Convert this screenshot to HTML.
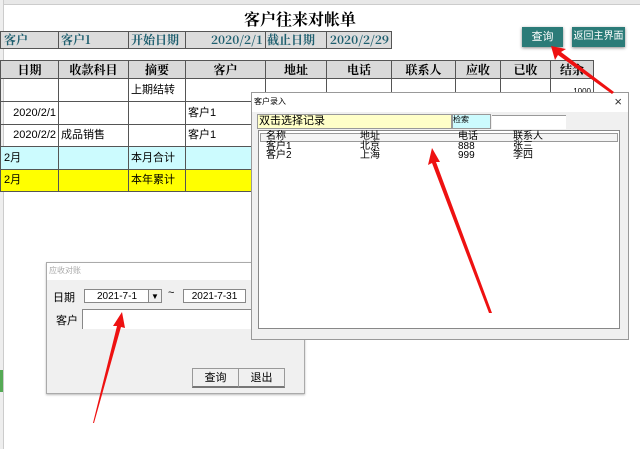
<!DOCTYPE html>
<html><head><meta charset="utf-8"><style>
body{margin:0;width:640px;height:449px;overflow:hidden;background:#fff;font-family:"Liberation Sans","Noto Sans CJK SC",sans-serif;position:relative;font-size:11px}
.a{position:absolute;box-sizing:border-box}
.c{position:absolute;box-sizing:border-box;border:1px solid #555;white-space:nowrap;line-height:20px;font-size:11px}
.h{background:#d9d9d9;text-align:center;font-weight:bold;font-family:"Noto Serif CJK SC",serif;font-size:12px}
.t{background:#dcdcdc;color:#1f5f6f;font-family:"Noto Serif CJK SC",serif;font-size:12px;font-weight:bold;line-height:15px}
</style></head><body>
<div class="a" style="left:0;top:0;width:640px;height:5px;background:#e8e8e8;border-bottom:1px solid #ccc"></div>
<div class="a" style="left:0;top:0;width:4px;height:449px;background:#eee;border-right:1px solid #ccc"></div>
<div class="a" style="left:0;top:370px;width:3px;height:22px;background:#5a5"></div>
<div class="a" style="left:200px;top:7px;width:200px;text-align:center;font-weight:bold;font-size:16px;font-family:'Noto Serif CJK SC',serif">客户往来对帐单</div>
<div class="c t" style="left:0;top:31px;width:59px;height:18px;padding-left:3px">客户</div>
<div class="c t" style="left:58px;top:31px;width:71px;height:18px;padding-left:2px">客户1</div>
<div class="c t" style="left:128px;top:31px;width:58px;height:18px;padding-left:2px">开始日期</div>
<div class="c t" style="left:185px;top:31px;width:81px;height:18px;text-align:right;padding-right:2px">2020/2/1</div>
<div class="c t" style="left:265px;top:31px;width:62px;height:18px;padding-left:1px">截止日期</div>
<div class="c t" style="left:326px;top:31px;width:66px;height:18px;text-align:right;padding-right:2px">2020/2/29</div>
<div class="a" style="left:522px;top:27px;width:41px;height:20px;background:#2b7b78;color:#fff;text-align:center;line-height:20px;box-shadow:0 1px 3px #888">查询</div>
<div class="a" style="left:572px;top:27px;width:53px;height:20px;background:#2b7b78;color:#fff;text-align:center;line-height:20px;font-size:10px;box-shadow:0 1px 3px #888">返回主界面</div>
<div class="c h" style="left:0;top:60px;width:59px;height:19px;line-height:17px">日期</div>
<div class="c h" style="left:58px;top:60px;width:71px;height:19px;line-height:17px">收款科目</div>
<div class="c h" style="left:128px;top:60px;width:58px;height:19px;line-height:17px">摘要</div>
<div class="c h" style="left:185px;top:60px;width:81px;height:19px;line-height:17px">客户</div>
<div class="c h" style="left:265px;top:60px;width:62px;height:19px;line-height:17px">地址</div>
<div class="c h" style="left:326px;top:60px;width:66px;height:19px;line-height:17px">电话</div>
<div class="c h" style="left:391px;top:60px;width:65px;height:19px;line-height:17px">联系人</div>
<div class="c h" style="left:455px;top:60px;width:46px;height:19px;line-height:17px">应收</div>
<div class="c h" style="left:500px;top:60px;width:51px;height:19px;line-height:17px">已收</div>
<div class="c h" style="left:550px;top:60px;width:44px;height:19px;line-height:17px">结余</div>
<div class="c" style="left:0;top:78px;width:59px;height:24px"></div>
<div class="c" style="left:58px;top:78px;width:71px;height:24px"></div>
<div class="c" style="left:128px;top:78px;width:58px;height:24px;line-height:22px;padding-left:2px">上期结转</div>
<div class="c" style="left:185px;top:78px;width:81px;height:24px"></div>
<div class="c" style="left:550px;top:78px;width:44px;height:24px;font-size:8px;text-align:right;line-height:26px;padding-right:2px">1000</div>
<div class="c" style="left:0;top:101px;width:59px;height:24px;line-height:22px;text-align:right;padding-right:2px">2020/2/1</div>
<div class="c" style="left:58px;top:101px;width:71px;height:24px"></div>
<div class="c" style="left:128px;top:101px;width:58px;height:24px"></div>
<div class="c" style="left:185px;top:101px;width:81px;height:24px;line-height:22px;padding-left:2px">客户1</div>
<div class="c" style="left:0;top:124px;width:59px;height:23px;line-height:21px;text-align:right;padding-right:2px">2020/2/2</div>
<div class="c" style="left:58px;top:124px;width:71px;height:23px;line-height:21px;padding-left:2px">成品销售</div>
<div class="c" style="left:128px;top:124px;width:58px;height:23px"></div>
<div class="c" style="left:185px;top:124px;width:81px;height:23px;line-height:21px;padding-left:2px">客户1</div>
<div class="c" style="left:0;top:146px;width:59px;height:24px;background:#ccfbfe;line-height:22px;padding-left:3px">2月</div>
<div class="c" style="left:58px;top:146px;width:71px;height:24px;background:#ccfbfe"></div>
<div class="c" style="left:128px;top:146px;width:58px;height:24px;background:#ccfbfe;line-height:22px;padding-left:2px">本月合计</div>
<div class="c" style="left:185px;top:146px;width:81px;height:24px;background:#ccfbfe"></div>
<div class="c" style="left:0;top:169px;width:59px;height:23px;background:#ffff00;line-height:21px;padding-left:3px">2月</div>
<div class="c" style="left:58px;top:169px;width:71px;height:23px;background:#ffff00"></div>
<div class="c" style="left:128px;top:169px;width:58px;height:23px;background:#ffff00;line-height:21px;padding-left:2px">本年累计</div>
<div class="c" style="left:185px;top:169px;width:81px;height:23px;background:#ffff00"></div>
<div class="a" style="left:391px;top:78px;width:1px;height:15px;background:#555"></div>
<div class="a" style="left:455px;top:78px;width:1px;height:15px;background:#555"></div>
<div class="a" style="left:500px;top:78px;width:1px;height:15px;background:#555"></div>
<div class="a" style="left:326px;top:78px;width:1px;height:15px;background:#555"></div>
<div class="a" style="left:46px;top:262px;width:259px;height:132px;background:#f0f0f0;border:1px solid #aaa;box-shadow:0 1px 2px #bbb">
<div class="a" style="left:0;top:0;width:257px;height:17px;background:#fff;color:#aaa;font-size:8px;line-height:15px;padding-left:2px">应收对账</div>
<div class="a" style="left:6px;top:26px;font-size:11px">日期</div>
<div class="a" style="left:37px;top:26px;width:65px;height:14px;background:#fff;border:1px solid #888;border-right:none;font-size:10px;text-align:center;line-height:13px">2021-7-1</div>
<div class="a" style="left:101px;top:26px;width:14px;height:14px;border:1px solid #888;font-size:8px;text-align:center;line-height:13px">▼</div>
<div class="a" style="left:121px;top:24px">~</div>
<div class="a" style="left:136px;top:26px;width:63px;height:14px;background:#fff;border:1px solid #888;font-size:10px;text-align:center;line-height:13px">2021-7-31</div>
<div class="a" style="left:9px;top:49px">客户</div>
<div class="a" style="left:35px;top:46px;width:224px;height:20px;background:#fff;border-left:1px solid #888;border-top:1px solid #888"></div>
<div class="a" style="left:145px;top:105px;width:47px;height:20px;border:1px solid #999;border-bottom:2px solid #777;text-align:center;line-height:18px">查询</div>
<div class="a" style="left:191px;top:105px;width:47px;height:20px;border:1px solid #999;border-bottom:2px solid #777;text-align:center;line-height:18px">退出</div>
</div>
<div class="a" style="left:251px;top:92px;width:378px;height:248px;background:#f0f0f0;border:1px solid #999">
<div class="a" style="left:0;top:0;width:376px;height:19px;background:#fff;font-size:8px;line-height:18px;padding-left:2px">客户录入</div>
<div class="a" style="right:6px;top:1px;font-size:13px;color:#333">×</div>
<div class="a" style="left:5px;top:21px;width:195px;height:15px;background:#ffffc8;border:1px solid #999;font-size:11px;line-height:13px;padding-left:1px">双击选择记录</div>
<div class="a" style="left:200px;top:21px;width:39px;height:15px;background:#ccfbfe;border:1px solid #999;font-size:8px;line-height:10px">检索</div>
<div class="a" style="left:240px;top:22px;width:74px;height:14px;background:#fff;border-top:1px solid #999"></div>
<div class="a" style="left:6px;top:37px;width:362px;height:199px;background:#fff;border:1px solid #888;font-size:10px;line-height:9.5px">
<div class="a" style="left:1px;top:2px;width:358px;height:9px;border:1px solid #999;background:#f4f4f4"></div>
<div class="a" style="left:7px;top:1px">名称<br>客户1<br>客户2</div>
<div class="a" style="left:101px;top:1px">地址<br>北京<br>上海</div>
<div class="a" style="left:199px;top:1px">电话<br>888<br>999</div>
<div class="a" style="left:254px;top:1px">联系人<br>张三<br>李四</div>
</div>
</div>
<svg class="a" style="left:0;top:0" width="640" height="449">
<g fill="#ee1111">
<polygon points="551,46 566,49 561,52 614,92 612,94 558,55 555,60"/>
<polygon points="432,148 440,162 436,162 492,313 489,313 432,163 428,165"/>
<polygon points="122,312 125,328 121,327 94,423 93,423 117,326 113,326"/>
</g></svg>
</body></html>
